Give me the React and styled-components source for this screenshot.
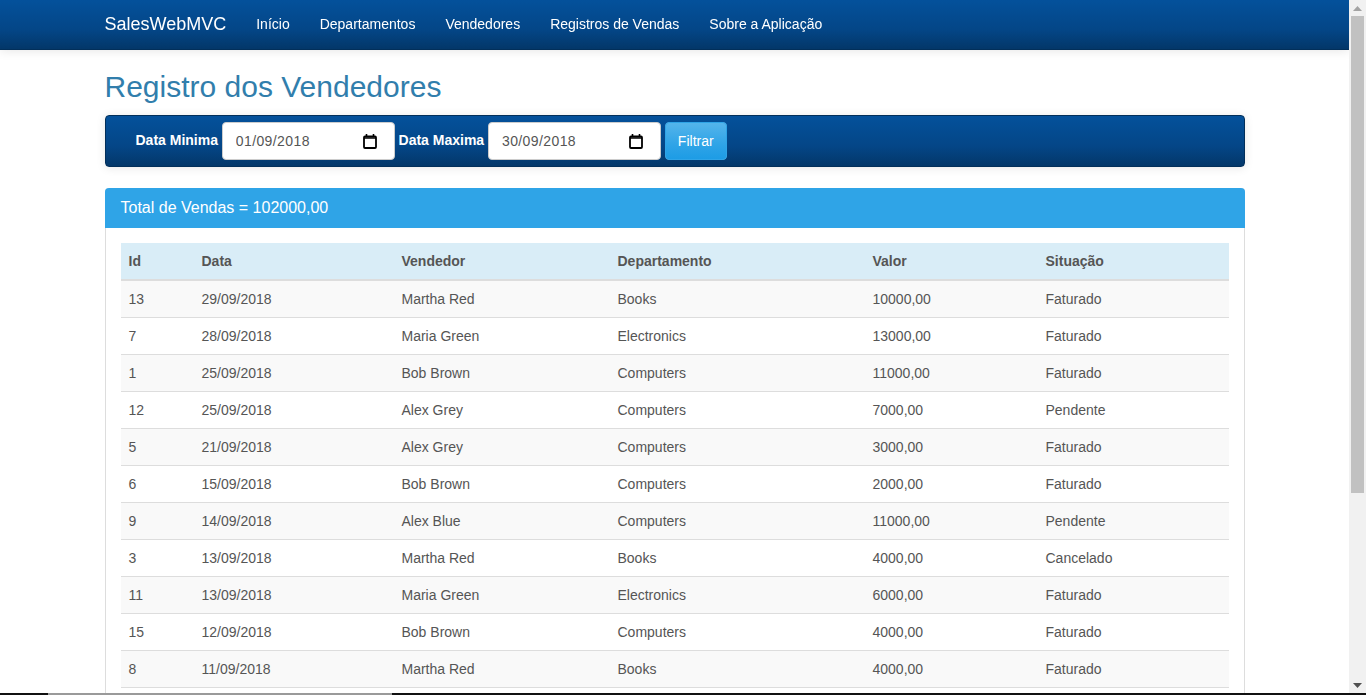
import styled, { createGlobalStyle } from "styled-components";

const GlobalStyle = createGlobalStyle`
  html {
    overflow: hidden;
  }
  body {
    margin: 0 17px 0 0;
    padding-top: 50px;
    font-family: "Liberation Sans", Arial, sans-serif;
    font-size: 14px;
    line-height: 20px;
    color: #555;
    background: #fff;
  }
  * {
    box-sizing: border-box;
  }
`;

const TopBar = styled.nav`
  position: fixed;
  top: 0;
  left: 0;
  right: 17px;
  z-index: 10;
  height: 50px;
  background-image: linear-gradient(#04519b, #044687 60%, #033769);
  border-bottom: 1px solid #022f5a;
  box-shadow: 0 1px 10px rgba(0, 0, 0, 0.1);
`;

const TopBarInner = styled.div`
  width: 1170px;
  margin: 0 auto;
  padding: 0 15px 2px;
  display: flex;
  align-items: center;
  height: 49px;
`;

const Brand = styled.a`
  font-size: 18px;
  color: #fff;
  margin-right: 15px;
`;

const NavLink = styled.a`
  padding: 0 15px;
  color: #fff;
`;

const Container = styled.main`
  width: 1170px;
  margin: 0 auto;
  padding: 0 15px;
`;

const Title = styled.h2`
  margin: 20px 0 12px;
  font-size: 30px;
  font-weight: 500;
  line-height: 33px;
  color: #317eac;
`;

const FilterBar = styled.form`
  display: flex;
  align-items: center;
  gap: 3.8px;
  height: 52px;
  margin-bottom: 21px;
  padding-left: 30px;
  border: 1px solid #022f5a;
  border-radius: 4px;
  background-image: linear-gradient(#04519b, #044687 60%, #033769);
  box-shadow: 0 1px 10px rgba(0, 0, 0, 0.1);
`;

const FilterLabel = styled.label`
  margin-bottom: 2px;
  font-weight: bold;
  color: #fff;
`;

const DateField = styled.div`
  display: flex;
  align-items: center;
  width: 173px;
  height: 38px;
  padding: 0 17px 0 13px;
  border: 1px solid #ccc;
  border-radius: 4px;
  background: #fff;
`;

const DateInput = styled.input`
  flex: 1;
  min-width: 0;
  padding: 0;
  border: 0;
  outline: 0;
  font-family: inherit;
  font-size: 14px;
  letter-spacing: 0.4px;
  color: #555;
  background: transparent;
`;

const FilterButton = styled.button`
  height: 38px;
  width: 62px;
  padding: 0;
  border: 1px solid #2fa4e7;
  border-radius: 4px;
  background-image: linear-gradient(#54b4eb, #2fa4e7 60%, #1d9ce5);
  font-family: inherit;
  font-size: 14px;
  color: #fff;
`;

const Panel = styled.section`
  border: 1px solid #dddddd;
  border-top: 0;
  border-radius: 4px;
  background: #fff;
`;

const PanelHeading = styled.div`
  height: 40px;
  margin: 0 -1px;
  padding: 11px 16px;
  font-size: 16px;
  line-height: 18px;
  color: #fff;
  background: #2fa4e7;
  border-radius: 4px 4px 0 0;
`;

const PanelBody = styled.div`
  padding: 15px;
`;

const Table = styled.table`
  width: 100%;
  table-layout: fixed;
  border-collapse: collapse;
  border-spacing: 0;
`;

const HeadRow = styled.tr`
  background: #d9edf7;
`;

const HeadCell = styled.th`
  width: ${(props) => props.$width}px;
  padding: 8px;
  height: 37px;
  text-align: left;
  font-weight: bold;
  border-bottom: 2px solid #ddd;
`;

const Row = styled.tr`
  &:nth-child(odd) {
    background: #f9f9f9;
  }
`;

const Cell = styled.td`
  padding: 8px;
  border-top: 1px solid #ddd;
`;

const LastLine = styled.tr`
  height: 1px;
  border-top: 1px solid #ddd;
`;

const ScrollBar = styled.div`
  position: fixed;
  top: 0;
  right: 0;
  bottom: 0;
  z-index: 15;
  width: 17px;
  display: flex;
  flex-direction: column;
  background: #f1f1f1;
`;

const ScrollButton = styled.div`
  flex: none;
  height: ${(props) => props.$height}px;
  display: flex;
  align-items: center;
  justify-content: center;
`;

const ScrollTrack = styled.div`
  flex: 1;
  padding: 0 2px;
`;

const ScrollThumb = styled.div`
  height: 477px;
  background: #c1c1c1;
`;

const EdgeLine = styled.div`
  position: fixed;
  left: 0;
  right: 0;
  bottom: 0;
  z-index: 20;
  height: 2px;
  background: linear-gradient(
    90deg,
    #111 0,
    #111 48px,
    #9a9a9a 48px,
    #9a9a9a 392px,
    #111 392px
  );
`;

const CalendarIcon = () => (
  <svg width="14" height="15" viewBox="0 0 14 15" fill="none" stroke="#000">
    <path d="M3.5 0v3M10.5 0v3" strokeWidth="1.6" />
    <rect x="1" y="2.5" width="12" height="11.5" rx="1" strokeWidth="1.8" />
    <path d="M1 4h12" strokeWidth="1.5" />
  </svg>
);

const columns = [
  ["Id", 73],
  ["Data", 200],
  ["Vendedor", 216],
  ["Departamento", 255],
  ["Valor", 173],
  ["Situação", 191],
];

const sales = [
  ["13", "29/09/2018", "Martha Red", "Books", "10000,00", "Faturado"],
  ["7", "28/09/2018", "Maria Green", "Electronics", "13000,00", "Faturado"],
  ["1", "25/09/2018", "Bob Brown", "Computers", "11000,00", "Faturado"],
  ["12", "25/09/2018", "Alex Grey", "Computers", "7000,00", "Pendente"],
  ["5", "21/09/2018", "Alex Grey", "Computers", "3000,00", "Faturado"],
  ["6", "15/09/2018", "Bob Brown", "Computers", "2000,00", "Faturado"],
  ["9", "14/09/2018", "Alex Blue", "Computers", "11000,00", "Pendente"],
  ["3", "13/09/2018", "Martha Red", "Books", "4000,00", "Cancelado"],
  ["11", "13/09/2018", "Maria Green", "Electronics", "6000,00", "Faturado"],
  ["15", "12/09/2018", "Bob Brown", "Computers", "4000,00", "Faturado"],
  ["8", "11/09/2018", "Martha Red", "Books", "4000,00", "Faturado"],
];

const links = ["Início", "Departamentos", "Vendedores", "Registros de Vendas", "Sobre a Aplicação"];

const App = () => {
  return (
    <>
      <GlobalStyle />
      <TopBar>
        <TopBarInner>
          <Brand>SalesWebMVC</Brand>
          {links.map((link) => (
            <NavLink key={link}>{link}</NavLink>
          ))}
        </TopBarInner>
      </TopBar>
      <Container>
        <Title>Registro dos Vendedores</Title>
        <FilterBar>
          <FilterLabel>Data Minima</FilterLabel>
          <DateField>
            <DateInput defaultValue="01/09/2018" />
            <CalendarIcon />
          </DateField>
          <FilterLabel>Data Maxima</FilterLabel>
          <DateField>
            <DateInput defaultValue="30/09/2018" />
            <CalendarIcon />
          </DateField>
          <FilterButton type="button">Filtrar</FilterButton>
        </FilterBar>
        <Panel>
          <PanelHeading>Total de Vendas = 102000,00</PanelHeading>
          <PanelBody>
            <Table>
              <thead>
                <HeadRow>
                  {columns.map(([name, width]) => (
                    <HeadCell key={name} $width={width}>
                      {name}
                    </HeadCell>
                  ))}
                </HeadRow>
              </thead>
              <tbody>
                {sales.map((sale) => (
                  <Row key={sale[0]}>
                    {sale.map((value, i) => (
                      <Cell key={i}>{value}</Cell>
                    ))}
                  </Row>
                ))}
                <LastLine />
              </tbody>
            </Table>
          </PanelBody>
        </Panel>
      </Container>
      <ScrollBar>
        <ScrollButton $height={16}>
          <svg width="9" height="5" viewBox="0 0 9 5">
            <path d="M4.5 0L9 5H0z" fill="#a3a3a3" />
          </svg>
        </ScrollButton>
        <ScrollTrack>
          <ScrollThumb />
        </ScrollTrack>
        <ScrollButton $height={19}>
          <svg width="9" height="5" viewBox="0 0 9 5">
            <path d="M0 0h9L4.5 5z" fill="#505050" />
          </svg>
        </ScrollButton>
      </ScrollBar>
      <EdgeLine />
    </>
  );
};

export default App;
